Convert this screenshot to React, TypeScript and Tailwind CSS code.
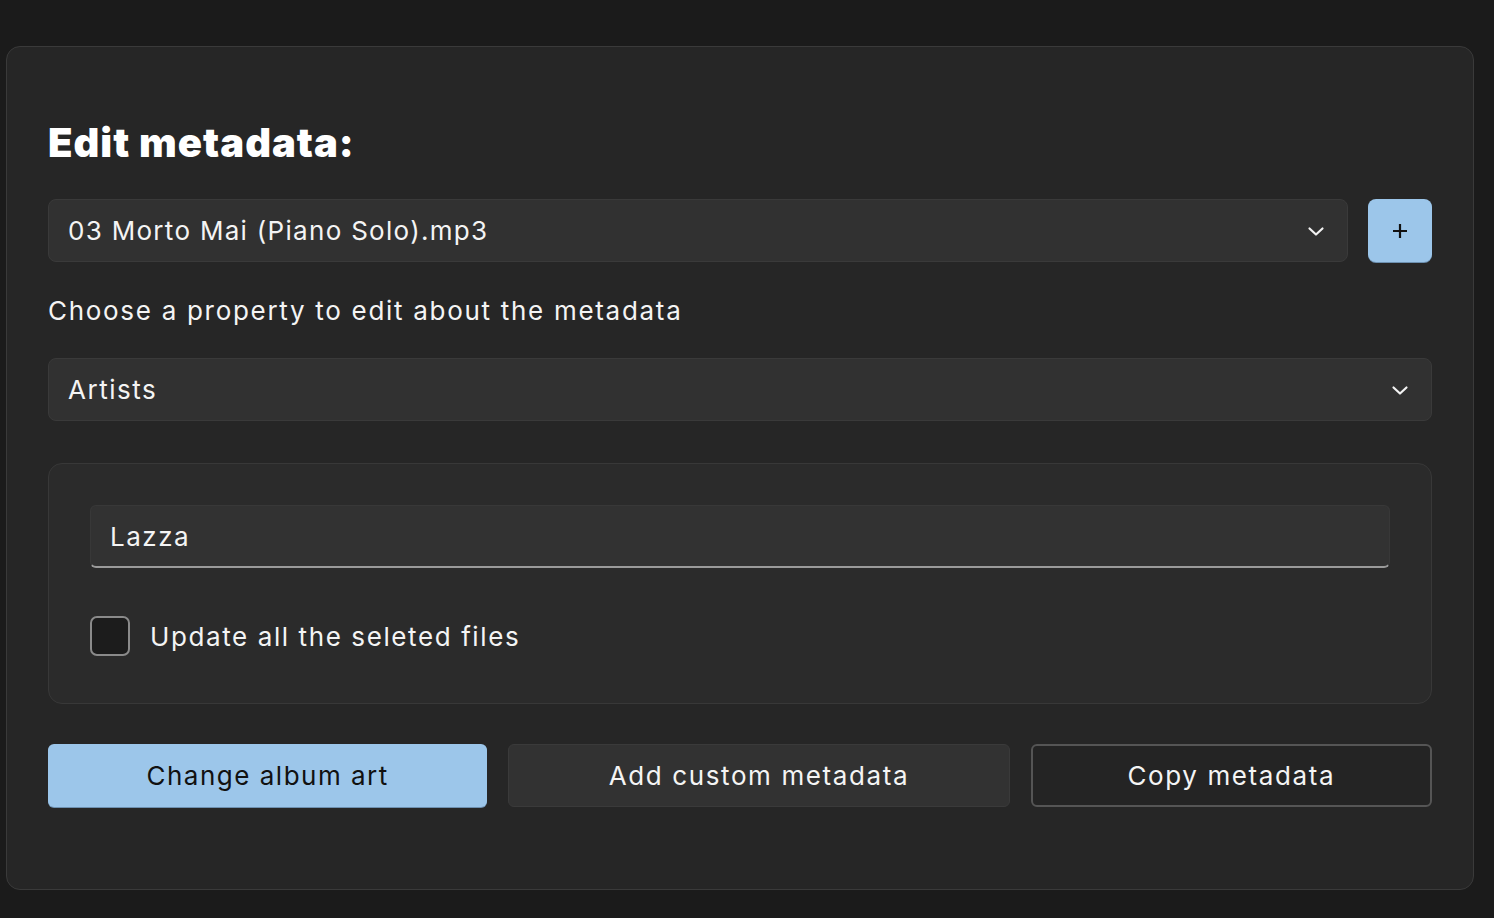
import React from "react";

const Chevron = () => (
  <svg width="18" height="18" viewBox="0 0 18 18" fill="none">
    <path d="M2.5 6.5 L9 12.5 L15.5 6.5" stroke="#f2f2f2" strokeWidth="2.2" strokeLinecap="round" strokeLinejoin="round" />
  </svg>
);

export default function App() {
  return (
    <div
      className="w-[1494px] h-[918px] bg-[#1b1b1b] pt-[46px] pl-[6px] pr-[20px] pb-[28px] text-[#f4f4f4]"
      style={{ fontFamily: "Inter, 'Noto Sans', sans-serif" }}
    >
      <div className="h-[844px] w-[1468px] rounded-[14px] border border-[#3a3a3a] bg-[#262626] px-[41px] pt-[72px]">
        <h1 className="text-[40px] leading-[48px] font-black tracking-[1px] text-white">Edit metadata:</h1>
        <div className="mt-[32px] flex gap-[20px]">
          <div className="flex h-[63px] flex-1 items-center justify-between rounded-[8px] border border-[#3a3a3a] bg-[#313131] pl-[19px] pr-[22px]">
            <span className="text-[26px] tracking-[1.3px]">03 Morto Mai (Piano Solo).mp3</span>
            <Chevron />
          </div>
          <div className="flex h-[63px] w-[64px] items-center justify-center rounded-[8px] bg-[#9cc6ea] shadow-[0_1px_0_#6d90b0]">
            <svg width="18" height="18" viewBox="0 0 18 18">
              <path d="M9 2 V16 M2 9 H16" stroke="#111" strokeWidth="2.2" />
            </svg>
          </div>
        </div>
        <p className="mt-[33px] text-[26px] leading-[32px] tracking-[1.7px]">Choose a property to edit about the metadata</p>
        <div className="mt-[31px] flex h-[63px] items-center justify-between rounded-[8px] border border-[#3a3a3a] bg-[#313131] pl-[19px] pr-[22px]">
          <span className="text-[26px] tracking-[1.5px]">Artists</span>
          <Chevron />
        </div>
        <div className="mt-[42px] h-[241px] rounded-[14px] border border-[#383838] bg-[#2b2b2b] px-[41px] pt-[41px]">
          <div className="flex h-[63px] items-center rounded-[6px] border border-[#383838] border-b-2 border-b-[#9a9a9a] bg-[#323232] pl-[19px]">
            <span className="text-[26px] tracking-[1.5px]">Lazza</span>
          </div>
          <div className="mt-[48px] flex items-center gap-[20px]">
            <div className="h-[40px] w-[40px] rounded-[7px] border-2 border-[#8a8a8a] bg-[#1c1c1c]" />
            <span className="text-[26px] tracking-[1.6px]">Update all the seleted files</span>
          </div>
        </div>
        <div className="mt-[40px] flex gap-[21px]">
          <div className="flex h-[63px] w-[440px] items-center justify-center rounded-[6px] bg-[#9cc6ea] text-[26px] tracking-[1.5px] text-[#111] shadow-[0_1px_0_#6d90b0]">
            Change album art
          </div>
          <div className="flex h-[63px] w-[502px] items-center justify-center rounded-[6px] border border-[#3a3a3a] bg-[#323232] text-[26px] tracking-[1.6px]">
            Add custom metadata
          </div>
          <div className="flex h-[63px] w-[402px] items-center justify-center rounded-[6px] border-2 border-[#555555] bg-[#242424] text-[26px] tracking-[1.6px]">
            Copy metadata
          </div>
        </div>
      </div>
    </div>
  );
}
